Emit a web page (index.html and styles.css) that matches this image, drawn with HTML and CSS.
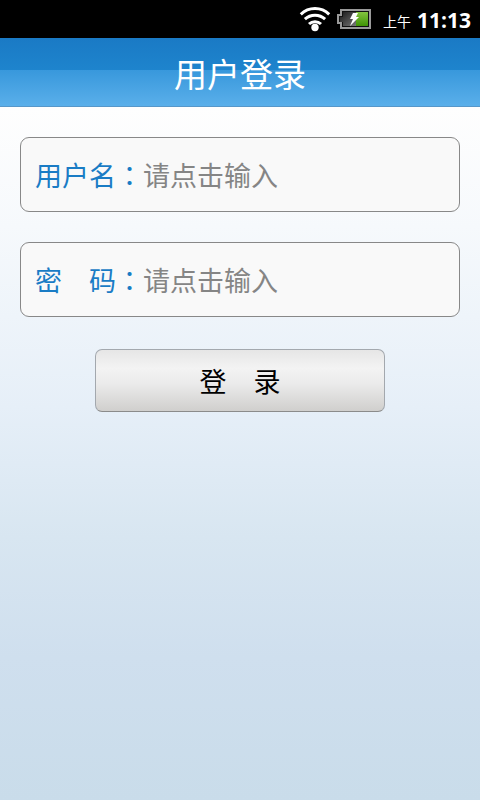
FILE: index.html
```html
<!doctype html>
<html lang="zh-CN">
<head>
<meta charset="utf-8">
<meta name="viewport" content="width=device-width, initial-scale=1">
<title>用户登录</title>
<link rel="stylesheet" href="styles.css">
</head>
<body>
<div class="status">
	<svg class="wifi" width="32" height="26" viewBox="0 0 32 26">
		<g fill="none" stroke="#fff" stroke-width="3">
			<path d="M1.8 8.3a20.6 20.6 0 0 1 28.4 0"/>
			<path d="M5.9 13.2a14.6 14.6 0 0 1 20.2 0"/>
			<path d="M10 18a8.8 8.8 0 0 1 12 0"/>
		</g>
		<circle cx="16" cy="21.500" r="3.7" fill="#fff"/>
	</svg>
	<svg class="battery" width="34" height="20" viewBox="0 0 34 20">
		<defs>
			<linearGradient id="empty" x1="0" y1="0" x2="1" y2="1">
				<stop offset="0" stop-color="#181818"/>
				<stop offset="1" stop-color="#777"/>
			</linearGradient>
			<linearGradient id="charge" x1="0" y1="0" x2="0" y2="1">
				<stop offset="0" stop-color="#83c340"/>
				<stop offset="1" stop-color="#3f9405"/>
			</linearGradient>
		</defs>
		<path d="M4 1h29v18H4v-5H1V6h3z" fill="#111" stroke="#9a9a9a" stroke-width="2"/>
		<path d="M6 3h13v14H6v-4H3V8h3z" fill="url(#empty)"/>
		<path d="M19 3h12v14H19z" fill="url(#charge)"/>
		<path d="M16 4h5l-2 4h3l-9 9 3-7h-3z" fill="#fff"/>
	</svg>
	<span class="ampm">上午</span>
	<span class="clock">11:13</span>
</div>
<header class="title">
	<h1>用户登录</h1>
</header>
<form class="login">
	<div class="field">
		<label for="user">用户名<span lang="zh-TW">：</span></label>
		<input type="text" id="user" placeholder="请点击输入">
	</div>
	<div class="field">
		<label for="pwd">密　码<span lang="zh-TW">：</span></label>
		<input type="password" id="pwd" placeholder="请点击输入">
	</div>
	<button type="button" class="btn">登　录</button>
</form>
</body>
</html>
```
FILE: styles.css
```css
*{margin:0;padding:0;box-sizing:border-box;}
body{
	display:flex; flex-direction:column; min-height:100vh;
	font-family:"Noto Sans CJK SC","Noto Sans",sans-serif;
	background:#fff;
}

.status{
	display:flex; align-items:center; justify-content:flex-end;
	height:38px; padding-right:9px;
	background:#000; color:#fff;
}
.wifi{margin-right:6px;}
.battery{margin-right:12px;}
.ampm{margin-right:6px; padding-top:4px; font-size:14px; line-height:20px;}
.clock{padding-top:2px; font:bold 21px/24px "Open Sans","Noto Sans",sans-serif;}

.title{
	height:69px;
	border-bottom:1px solid #5797c9;
	background:linear-gradient(#1a7ac5 0,#1e84cd 32px,#3898dc 32px,#5aafea 100%);
}
.title h1{
	font-size:33px; font-weight:normal; line-height:70px;
	text-align:center; color:#fff;
}

.login{
	flex:1;
	display:flex; flex-direction:column;
	padding:30px 20px;
	background:linear-gradient(#fefefe 0,#f6f9fc 120px,#e6eff8 300px,#d8e6f1 430px,#cfdfee 550px,#c9dcea 100%);
}
.field{
	display:flex; align-items:center;
	height:75px; margin-bottom:30px; padding:0 14px;
	border:1px solid #888; border-radius:9px;
	background:#f9f9f9;
}
.field label{
	font-size:27px; line-height:40px; white-space:nowrap; color:#1a7cc5;
}
.field label span{font-family:"Noto Sans CJK TC",sans-serif;}
.field input{
	flex:1; min-width:0; height:40px;
	border:0; outline:0; background:none;
	font-family:inherit; font-size:27px; color:#333;
}
.field input::placeholder{color:#858585; opacity:1;}

.btn{
	align-self:center;
	width:290px; max-width:100%; height:63px; margin-top:2px;
	border:1px solid #a3a8ae; border-bottom-color:#8b8b8b; border-radius:7px;
	background:linear-gradient(#e6e6e6 0,#f3f3f3 30%,#ebebeb 55%,#d0cfcd 100%);
	font-family:inherit; font-size:27px; color:#000;
}
```
